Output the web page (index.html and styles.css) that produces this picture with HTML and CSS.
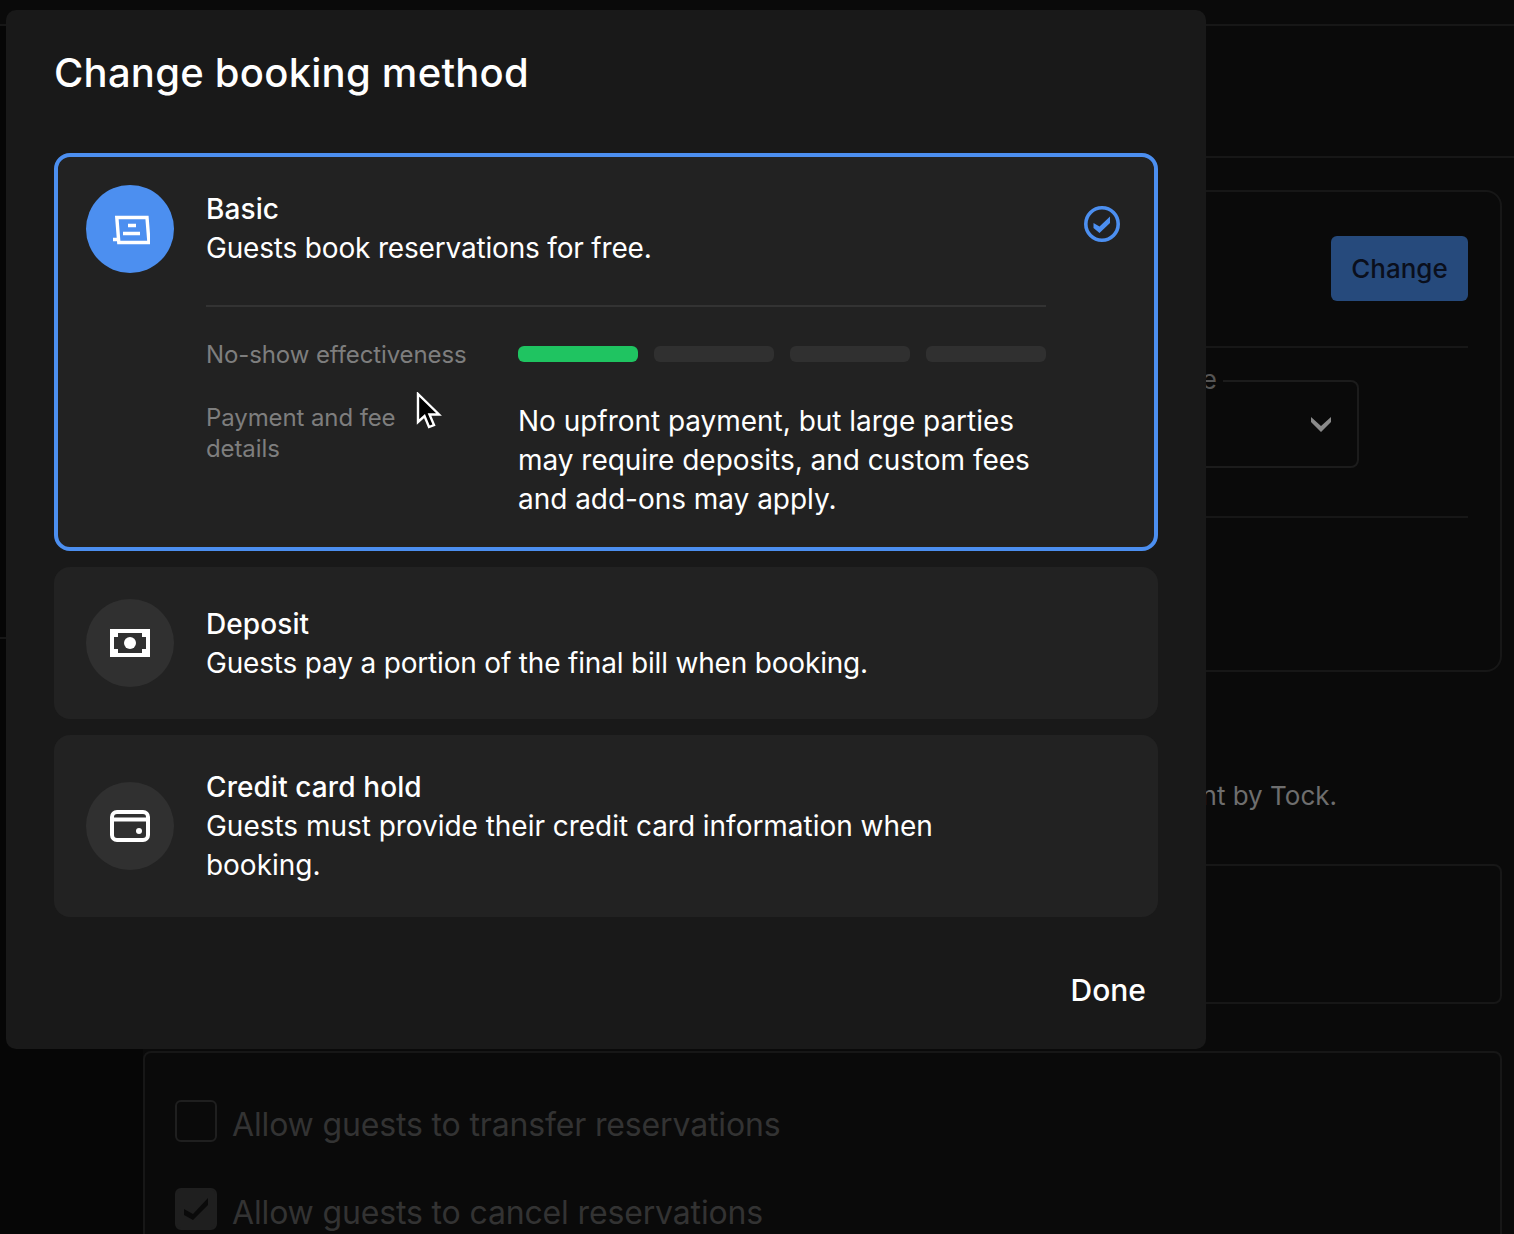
FILE: index.html
```html
<!DOCTYPE html>
<html lang="en">
<head>
    <meta charset="UTF-8">
    <title>Change booking method</title>
    <link rel="stylesheet" href="styles.css">
</head>
<body>
    <div class="page">
        <div class="page-top"></div>
        <div class="page-main">
            <div class="side"><div class="side-top"></div></div>
            <div class="content">
                <div class="page-head"></div>
                <div class="card card-method">
                    <div class="method-row">
                        <button class="btn-change">Change</button>
                    </div>
                    <div class="method-row method-select">
                        <div class="select-box">
                            <span class="select-label">Type</span>
                            <svg width="20" height="15" viewBox="0 0 20 15"><path d="M0 0 L10 9 L20 0 V5 L10 15 L0 5 Z" fill="#8a8a8a"/></svg>
                        </div>
                    </div>
                </div>
                <p class="tock-note">Payment by Tock.</p>
                <div class="card card-empty"></div>
                <div class="card card-options">
                    <label class="check-row"><span class="check-box"></span><span class="check-text">Allow guests to transfer reservations</span></label>
                    <label class="check-row"><span class="check-box is-on"><svg width="24" height="22" viewBox="0 0 24 22"><path d="M0 11 L9 16 L24 0 V7 L9 22 L0 17 Z" fill="#0a0a0a"/></svg></span><span class="check-text">Allow guests to cancel reservations</span></label>
                </div>
            </div>
        </div>
    </div>

    <div class="modal">
        <h1 class="modal-title">Change booking method</h1>

        <div class="options">
            <div class="option is-selected">
                <div class="option-icon is-blue">
                    <svg width="40" height="32" viewBox="0 0 40 32">
                        <path d="M6.8 4.5 H37 L39 29.5 H8.8 L6.8 4.5 Z" fill="none" stroke="#fff" stroke-width="3.4"/>
                        <path d="M3 26.5 H8 M18 12.5 H26 M13 20.5 H30" stroke="#fff" stroke-width="3.4"/>
                    </svg>
                </div>
                <div class="option-body">
                    <div class="option-title">Basic</div>
                    <div class="option-desc is-tight">Guests book reservations for free.</div>
                    <div class="details">
                        <div class="details-label">No-show effectiveness</div>
                        <div class="meter">
                            <span class="meter-seg is-on"></span>
                            <span class="meter-seg"></span>
                            <span class="meter-seg"></span>
                            <span class="meter-seg"></span>
                        </div>
                        <div class="details-label">Payment and fee details</div>
                        <div class="details-text">No upfront payment, but large parties may require deposits, and custom fees and add-ons may apply.</div>
                    </div>
                </div>
                <svg class="option-check" width="36" height="36" viewBox="0 0 36 36">
                    <circle cx="18" cy="18" r="16.2" fill="none" stroke="#4c8ff0" stroke-width="3.6"/>
                    <path d="M9.5 17 L15.5 20.5 L26 10.5 V17 L15.5 27 L9.5 22 Z" fill="#4c8ff0"/>
                </svg>
            </div>

            <div class="option">
                <div class="option-icon">
                    <svg width="40" height="28" viewBox="0 0 40 28">
                        <path fill-rule="evenodd" fill="#fff" d="M0 0 H40 V28 H0 Z M8 4 V8 H4 V20 H8 V24 H32 V20 H36 V8 H32 V4 Z"/>
                        <circle cx="20" cy="14" r="6" fill="#fff"/>
                    </svg>
                </div>
                <div class="option-body">
                    <div class="option-title">Deposit</div>
                    <div class="option-desc is-tight">Guests pay a portion of the final bill when booking.</div>
                </div>
            </div>

            <div class="option">
                <div class="option-icon">
                    <svg width="40" height="32" viewBox="0 0 40 32">
                        <rect x="2" y="2" width="36" height="28" rx="5" fill="none" stroke="#fff" stroke-width="4"/>
                        <path d="M2 9.5 H38" stroke="#fff" stroke-width="4"/>
                        <circle cx="29" cy="21" r="3" fill="#fff"/>
                    </svg>
                </div>
                <div class="option-body">
                    <div class="option-title">Credit card hold</div>
                    <div class="option-desc">Guests must provide their credit card information when booking.</div>
                </div>
            </div>
        </div>

        <div class="modal-foot">
            <button class="btn-done">Done</button>
        </div>
    </div>

    <svg class="cursor" width="26" height="38" viewBox="0 0 26 38">
        <path d="M2 2 V30 L8.5 24 L13 35 L18 33 L13.5 22.5 H23 Z" fill="#000" stroke="#fff" stroke-width="2.4"/>
    </svg>
</body>
</html>
```

FILE: styles.css
```css
html, body {
    margin: 0;
    padding: 0;
    height: 100%;
    overflow: hidden;
    background: #0a0a0a;
    font-family: "Inter", "Liberation Sans", sans-serif;
}

/* dimmed page behind the dialog */
.page {
    height: 1234px;
    overflow: hidden;
}
.page-top {
    height: 24px;
    border-bottom: 2px solid #171717;
}
.page-main {
    display: flex;
}
.side {
    flex: none;
    width: 143px;
    background: #060606;
}
.side-top {
    height: 611px;
    border-bottom: 2px solid #171717;
}
.content {
    flex: 1;
    min-width: 0;
}
.page-head {
    height: 130px;
    border-bottom: 2px solid #171717;
}
.card {
    margin-right: 12px;
    border: 2px solid #171717;
    border-radius: 16px;
}
.card-method {
    margin-top: 32px;
    height: 478px;
    padding: 0 32px;
}
.method-row {
    display: flex;
    justify-content: flex-end;
    height: 110px;
    padding-top: 44px;
    border-bottom: 2px solid #171717;
}
.btn-change {
    width: 137px;
    height: 65px;
    border: none;
    border-radius: 6px;
    background: #264a7c;
    color: #0a0f1c;
    font-family: inherit;
    font-size: 26px;
    font-weight: 500;
}
.method-select {
    height: 168px;
    padding-top: 0;
    align-items: flex-start;
    justify-content: flex-start;
}
.select-box {
    position: relative;
    display: flex;
    align-items: center;
    justify-content: flex-end;
    box-sizing: border-box;
    width: 1182px;
    height: 88px;
    margin-top: 32px;
    padding-right: 26px;
    border: 2px solid #1c1c1c;
    border-radius: 8px;
}
.select-label {
    position: absolute;
    right: 134px;
    top: -17px;
    padding: 0 6px;
    background: #0a0a0a;
    color: #555;
    font-size: 26px;
    line-height: 30px;
}
.tock-note {
    margin: 105px 177px 0 0;
    height: 38px;
    text-align: right;
    color: #6e6e6e;
    font-size: 26px;
    line-height: 38px;
}
.card-empty {
    margin-top: 49px;
    height: 136px;
    border-radius: 8px;
}
.card-options {
    margin-top: 47px;
    height: 300px;
    padding: 46px 30px;
    border-radius: 8px;
}
.check-row {
    display: flex;
    align-items: center;
    gap: 15px;
    height: 44px;
    margin-bottom: 44px;
    color: #333;
    font-size: 32px;
}
.check-text {
    padding-top: 6px;
    letter-spacing: -0.15px;
}
.check-box {
    display: flex;
    align-items: center;
    justify-content: center;
    box-sizing: border-box;
    width: 42px;
    height: 42px;
    border: 2px solid #1f1f1f;
    border-radius: 6px;
}
.check-box.is-on {
    background: #1f1f1f;
}

/* dialog */
.modal {
    position: absolute;
    left: 6px;
    top: 10px;
    box-sizing: border-box;
    width: 1200px;
    height: 1039px;
    padding: 0 48px;
    background: #191919;
    border-radius: 10px;
    color: #fff;
}
.modal-title {
    margin: 0;
    padding-top: 37px;
    height: 106px;
    font-size: 40px;
    line-height: 52px;
    font-weight: 500;
    letter-spacing: 0.25px;
}
.options {
    display: flex;
    flex-direction: column;
    gap: 16px;
}
.option {
    display: flex;
    align-items: center;
    gap: 32px;
    box-sizing: border-box;
    padding: 32px;
    background: #222;
    border-radius: 16px;
}
.option.is-selected {
    align-items: flex-start;
    padding: 28px;
    border: 4px solid #4c8ff0;
}
.is-selected .option-body {
    margin-top: 4px;
}
.option-icon {
    flex: none;
    display: flex;
    align-items: center;
    justify-content: center;
    width: 88px;
    height: 88px;
    border-radius: 50%;
    background: #303030;
}
.option-icon.is-blue {
    background: #4c8ff0;
}
.option-body {
    width: 840px;
    padding-top: 1px;
    font-size: 28px;
    line-height: 39px;
}
.option-title {
    font-weight: 500;
    letter-spacing: 0.1px;
}
.option-desc {
    letter-spacing: -0.03px;
}
.option-desc.is-tight {
    letter-spacing: -0.18px;
}
.details {
    display: grid;
    grid-template-columns: 312px 528px;
    row-gap: 32px;
    margin-top: 37px;
    padding-top: 32px;
    border-top: 2px solid #333;
}
.details-label {
    width: 266px;
    color: #7e7e7e;
    font-size: 24px;
    line-height: 31px;
    letter-spacing: -0.1px;
}
.details-text {
    letter-spacing: -0.03px;
}
.meter {
    display: flex;
    gap: 16px;
    padding-top: 7px;
}
.meter-seg {
    width: 120px;
    height: 16px;
    border-radius: 6px;
    background: #303030;
}
.meter-seg.is-on {
    background: #1fc461;
}
.option-check {
    flex: none;
    margin-top: 21px;
    margin-left: 6px;
}
.modal-foot {
    display: flex;
    justify-content: flex-end;
    padding-top: 53px;
    padding-right: 12px;
}
.btn-done {
    padding: 0;
    border: none;
    background: none;
    color: #fff;
    font-family: inherit;
    font-size: 30px;
    line-height: 40px;
    font-weight: 500;
}

/* pointer captured in the recording */
.cursor {
    position: absolute;
    left: 416px;
    top: 392px;
}
```
